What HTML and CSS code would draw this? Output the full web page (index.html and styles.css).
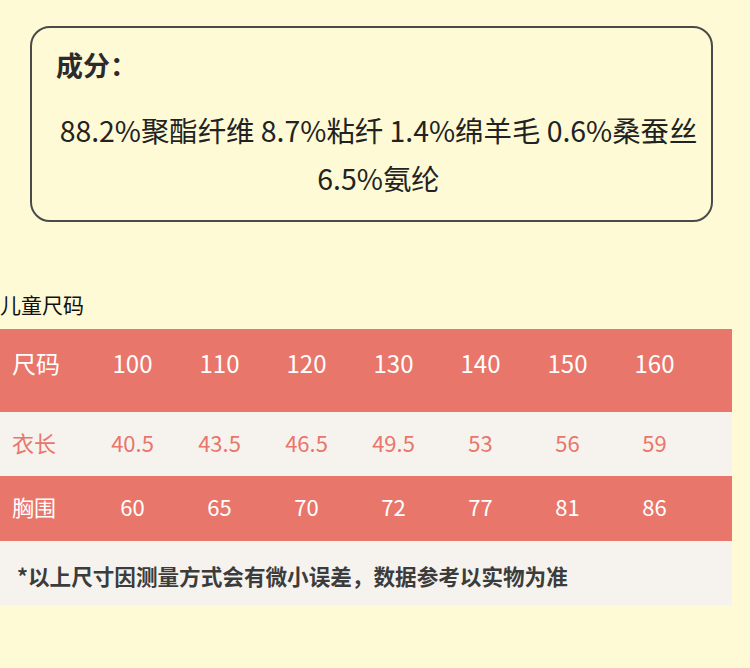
FILE: index.html
```html
<!DOCTYPE html>
<html lang="zh">
<head>
<meta charset="utf-8">
<link rel="stylesheet" href="styles.css">
</head>
<body>
<div class="card">
  <div class="card-title">成分：</div>
  <div class="card-text">88.2%聚酯纤维 8.7%粘纤 1.4%绵羊毛 0.6%桑蚕丝 6.5%氨纶</div>
</div>
<div class="section-title">儿童尺码</div>
<div class="table">
  <div class="row row-head">
    <div class="label">尺码</div>
    <div class="cell">100</div><div class="cell">110</div><div class="cell">120</div><div class="cell">130</div><div class="cell">140</div><div class="cell">150</div><div class="cell">160</div>
  </div>
  <div class="row row-light">
    <div class="label">衣长</div>
    <div class="cell">40.5</div><div class="cell">43.5</div><div class="cell">46.5</div><div class="cell">49.5</div><div class="cell">53</div><div class="cell">56</div><div class="cell">59</div>
  </div>
  <div class="row row-red">
    <div class="label">胸围</div>
    <div class="cell">60</div><div class="cell">65</div><div class="cell">70</div><div class="cell">72</div><div class="cell">77</div><div class="cell">81</div><div class="cell">86</div>
  </div>
  <div class="note">*以上尺寸因测量方式会有微小误差，数据参考以实物为准</div>
</div>
</body>
</html>
```
FILE: styles.css
```css
html, body {
  margin: 0;
  padding: 0;
}
body {
  background: #fefad6;
  font-family: "Noto Sans CJK SC", "Noto Sans", sans-serif;
  color: #222;
  width: 750px;
  height: 668px;
  overflow: hidden;
}
.card {
  box-sizing: border-box;
  margin: 26px 0 0 30px;
  width: 683px;
  height: 196px;
  border: 2px solid #4a4a4a;
  border-radius: 20px;
  padding: 17px 0 0 24px;
}
.card-title {
  font-size: 27px;
  font-weight: 700;
  line-height: 40px;
  color: #2b2b2b;
}
.card-text {
  margin-top: 21px;
  font-size: 28.4px;
  line-height: 48px;
  text-align: center;
  padding-right: 10px;
  color: #222;
}
.section-title {
  margin-top: 67px;
  font-size: 21px;
  line-height: 30px;
  color: #111;
}
.table {
  margin-top: 10px;
  width: 732px;
}
.row {
  display: grid;
  grid-template-columns: 89px repeat(7, 87px) 1fr;
  box-sizing: border-box;
}
.label {
  padding-left: 12px;
}
.cell {
  text-align: center;
}
.row-head {
  background: #e9766a;
  color: #fff;
  height: 83px;
  padding-top: 17px;
  font-size: 24px;
  line-height: 34px;
}
.row-light {
  background: #f6f3ee;
  color: #e9766a;
  height: 64px;
  padding-top: 15px;
  font-size: 22px;
  line-height: 30px;
}
.row-red {
  background: #e9766a;
  color: #fff;
  height: 65px;
  padding-top: 15px;
  font-size: 22px;
  line-height: 30px;
}
.note {
  background: #f6f3ee;
  height: 64px;
  box-sizing: border-box;
  padding: 20px 0 0 17px;
  font-size: 21.6px;
  line-height: 30px;
  font-weight: 700;
  color: #3c3c3c;
}
```
